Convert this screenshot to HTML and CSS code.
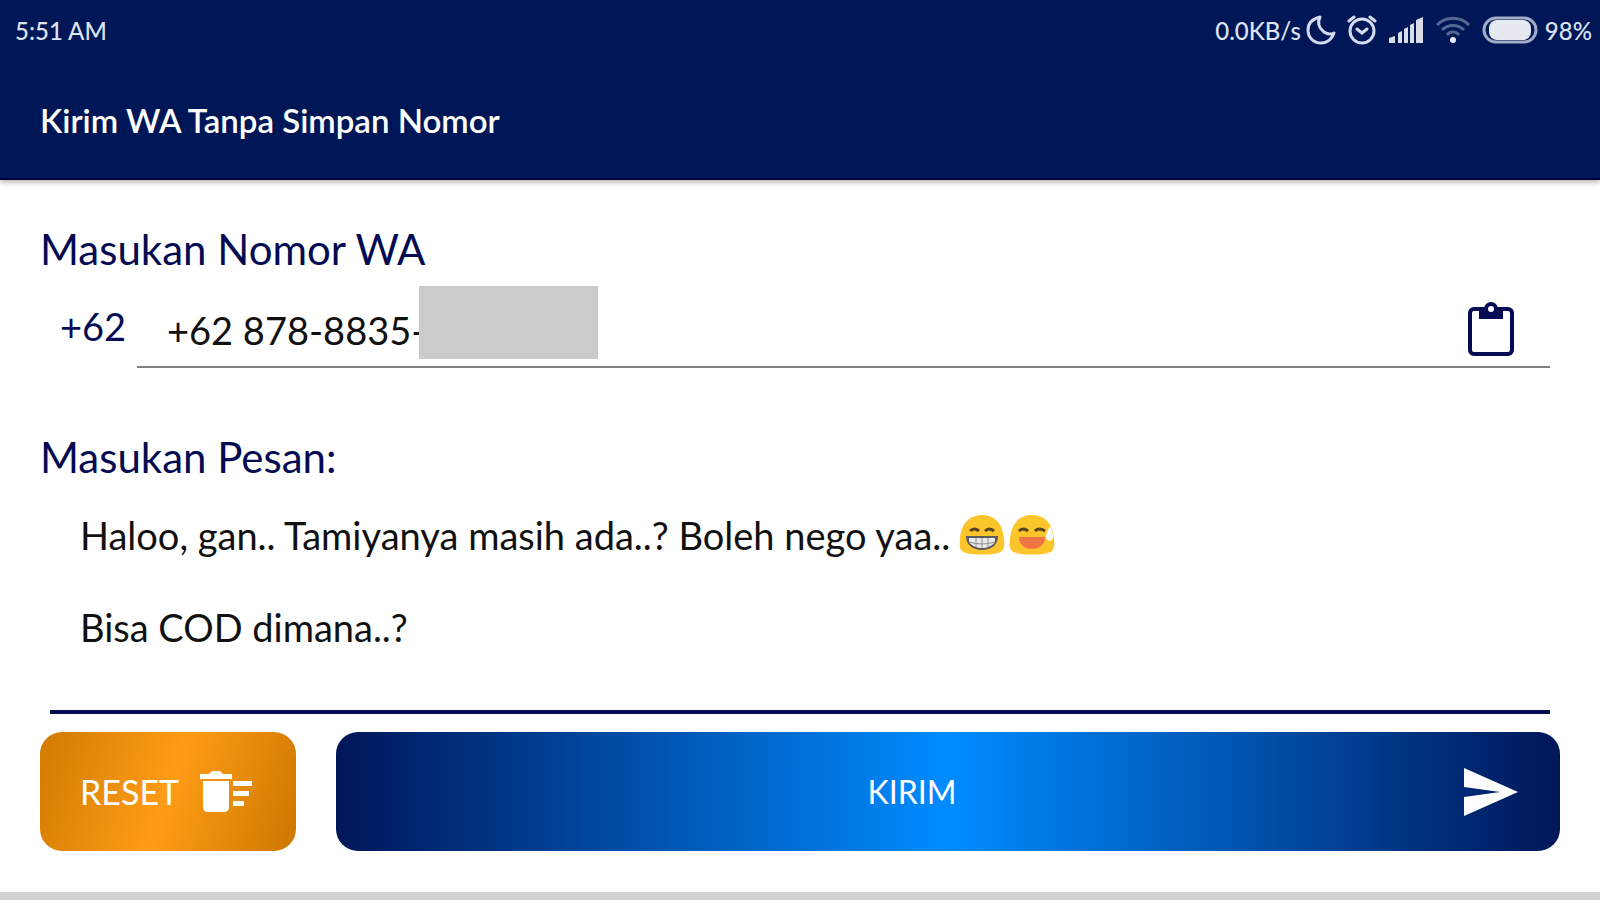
FILE: index.html
```html
<!DOCTYPE html>
<html lang="id">
<head>
<meta charset="utf-8">
<meta name="viewport" content="width=device-width, initial-scale=1">
<title>Kirim WA Tanpa Simpan Nomor</title>
<link rel="stylesheet" href="styles.css">
</head>
<body>
<header class="app-header">
  <div class="status-bar">
    <span class="clock">5:51 AM</span>
    <div class="status-icons">
      <span class="rate">0.0KB/s</span>
      <svg class="icon-moon" width="30" height="30" viewBox="0 0 30 30" fill="none" stroke="#d4dbee" stroke-width="3" stroke-linejoin="round"><path d="M14 2C6 4 2 9 2 15c0 8 6 13 13 13 6 0 11-4 13-10-4 2-7 1-10-1-5-4-7-9-4-15z"/></svg>
      <svg class="icon-alarm" width="30" height="30" viewBox="0 0 30 30" fill="none" stroke="#d4dbee" stroke-width="3" stroke-linecap="round"><circle cx="15" cy="16" r="12"/><path d="M10 14l5 4 5-4M2 6l5-4M28 6l-5-4"/></svg>
      <svg class="icon-signal" width="36" height="28" viewBox="0 0 36 28" fill="#d9dde8"><path d="M1 22l6-2v7H1zM10 17l4-2v12h-4zM16 13l4-2v16h-4zM22 9l4-2v20h-4zM28 4l7-3v26h-7z"/></svg>
      <svg class="icon-wifi" width="36" height="28" viewBox="0 0 36 28" fill="none" stroke="#536791" stroke-width="3"><path d="M2 9c9-9 23-9 32 0M7 14c6-6 16-6 22 0M12 19c3-4 9-4 12 0"/><circle cx="18" cy="24" r="3" fill="#e8ecf6" stroke="none"/></svg>
      <svg class="icon-battery" width="56" height="28" viewBox="0 0 56 28"><rect x="2" y="2" width="52" height="24" rx="12" fill="none" stroke="#a4acc6" stroke-width="3"/><rect x="7" y="4" width="42" height="20" rx="8" fill="#e6e9f0"/></svg>
      <span class="level">98%</span>
    </div>
  </div>
  <h1 class="title">Kirim WA Tanpa Simpan Nomor</h1>
</header>
<main class="form">
  <label class="label" for="phone">Masukan Nomor WA</label>
  <div class="phone-row">
    <span class="prefix">+62</span>
    <div class="phone-field">
      <input class="phone-input" id="phone" type="tel" value="+62 878-8835-">
      <span class="redaction"></span>
      <button class="paste" type="button" aria-label="Tempel">
        <svg width="46" height="56" viewBox="0 0 46 56" fill="none" stroke="#040b52" stroke-width="4"><rect x="2" y="8" width="42" height="45" rx="4"/><path d="M11 8h24v10H11z" fill="#040b52" stroke="none"/><circle cx="23" cy="8" r="5" fill="#fff"/></svg>
      </button>
    </div>
  </div>
  <label class="label" for="message">Masukan Pesan:</label>
  <div class="message-field">
    <textarea class="message-input" id="message" rows="4">Haloo, gan.. Tamiyanya masih ada..? Boleh nego yaa..

Bisa COD dimana..?</textarea>
    <span class="emojis">
      <svg width="46" height="42" viewBox="0 0 46 42"><path d="M23 1C10 1 2 10 1 25c-1 9 0 12 6 14 8 2 24 2 32 0 6-2 7-5 6-14C44 10 36 1 23 1z" fill="#fcc52c"/><path d="M11 17q4-4 9 0M26 17q4-4 9 0" fill="none" stroke="#56451d" stroke-width="3"/><path d="M7 22h32c0 9-7 14-16 14S7 31 7 22z" fill="#5a5a5c"/><path d="M10 24h26v4c-3 4-8 6-13 6s-10-2-13-6z" fill="#e9e9e9"/><path d="M17 24v9M23 24v10M29 24v9M10 28q13 4 26 0" fill="none" stroke="#8e8e90"/></svg>
      <svg width="46" height="42" viewBox="0 0 46 42"><path d="M23 1C10 1 2 10 1 25c-1 9 0 12 6 14 8 2 24 2 32 0 6-2 7-5 6-14C44 10 36 1 23 1z" fill="#fcc52c"/><path d="M10 17q4-4 9 0M26 17q4-4 10 0" fill="none" stroke="#56451d" stroke-width="3"/><path d="M10 23h26c0 8-6 12-13 12s-13-4-13-12z" fill="#ef7544"/><path d="M41 12c-3 5-4 8-4 11 0 5 7 5 7 0 0-4-1-7-3-11z" fill="#f7fbfd"/></svg>
    </span>
  </div>
  <div class="actions">
    <button class="btn btn-reset" type="button">
      <span>RESET</span>
      <svg width="52" height="42" viewBox="0 0 52 42" fill="#fff"><path d="M0 3h9l3-3h8l3 3h9v5H0zM3 10h26v26q0 5-5 5H8q-5 0-5-5zM33 10h19v5H33zM33 20h16v5H33zM33 30h11v5H33z"/></svg>
    </button>
    <button class="btn btn-send" type="button">
      <span class="send-text">KIRIM</span>
      <svg width="54" height="48" viewBox="0 0 54 48" fill="#fff"><path d="M0 0l54 24L0 48V29l36-5L0 19z"/></svg>
    </button>
  </div>
</main>
<footer class="bottom-edge"></footer>
</body>
</html>
```
FILE: styles.css
```css
* {
  box-sizing: border-box;
}

body {
  margin: 0;
  min-height: 100vh;
  display: flex;
  flex-direction: column;
  background: #fff;
  color: #111;
  font-family: Lato, "Open Sans", sans-serif;
}

button,
input,
textarea {
  font: inherit;
  border: 0;
  padding: 0;
  background: transparent;
  outline: 0;
}

svg {
  display: block;
  flex: none;
}

.app-header {
  height: 180px;
  background: #001757;
  color: #fff;
  border-bottom: 2px solid #00003f;
  box-shadow: 0 2px 6px rgba(60, 40, 20, 0.4);
}

.status-bar {
  height: 60px;
  padding: 0 8px 0 15px;
  display: flex;
  align-items: center;
  justify-content: space-between;
  color: #dde3f3;
  font-size: 24px;
  font-weight: 500;
}

.status-icons {
  display: flex;
  align-items: center;
  gap: 11px;
}

.rate {
  margin-right: -6px;
}

.icon-battery {
  margin-right: -4px;
}

.title {
  margin: 0;
  padding: 40px 40px 0;
  font-size: 33px;
  line-height: 40px;
  font-weight: 600;
}

.form {
  flex: 1;
  padding: 43px 40px 0;
  display: flex;
  flex-direction: column;
}

.label {
  color: #040b52;
  font-size: 42px;
  line-height: 52px;
}

.phone-row {
  display: flex;
  margin: 9px 10px 63px 20px;
  color: #040b52;
  font-size: 38px;
}

.prefix {
  width: 77px;
  line-height: 84px;
}

.phone-field {
  position: relative;
  flex: 1;
  display: flex;
  height: 84px;
  border-bottom: 2px solid #808080;
}

.phone-input {
  flex: 1;
  min-width: 0;
  padding: 10px 0 0 30px;
  color: #111;
}

.redaction {
  position: absolute;
  left: 282px;
  top: 2px;
  width: 179px;
  height: 73px;
  background: #cbcbcb;
}

.paste {
  margin: 17px 36px 0 0;
  align-self: flex-start;
}

.message-field {
  position: relative;
  display: flex;
  margin: 29px 10px 0;
}

.message-input {
  flex: 1;
  height: 202px;
  padding: 0 30px;
  border-bottom: 4px solid #0a0a4e;
  color: #111;
  font-size: 38px;
  line-height: 46px;
  resize: none;
  overflow: hidden;
}

.emojis {
  position: absolute;
  left: 909px;
  top: 2px;
  display: flex;
  gap: 4px;
}

.actions {
  display: flex;
  gap: 40px;
  margin-top: 18px;
}

.btn {
  height: 119px;
  border-radius: 22px;
  display: flex;
  align-items: center;
  color: #fff;
  font-size: 34px;
}

.btn-reset {
  width: 256px;
  padding: 0 44px 0 40px;
  justify-content: space-between;
  background: linear-gradient(108deg, #cf7b02, #ff9c16 50%, #cb7700);
}

.btn-send {
  flex: 1;
  padding: 0 42px;
  font-size: 32px;
  background: linear-gradient(90deg, #001659, #008cff 50%, #001659);
}

.send-text {
  flex: 1;
  padding-right: 18px;
}

.bottom-edge {
  height: 8px;
  background: #d1d1d1;
}
```
